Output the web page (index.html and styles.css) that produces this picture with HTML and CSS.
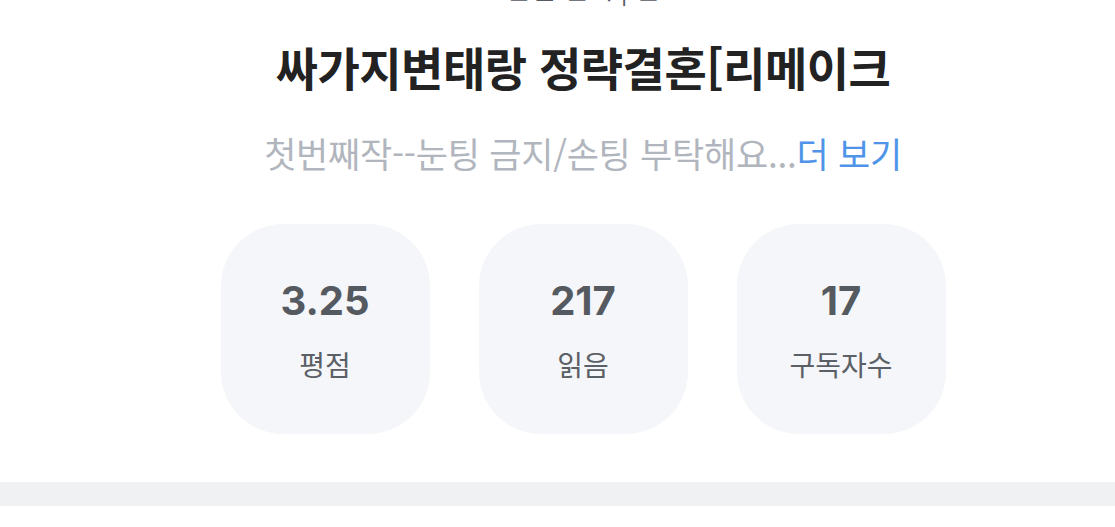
FILE: index.html
```html
<!DOCTYPE html>
<html lang="ko">
<head>
  <meta charset="UTF-8">
  <meta name="viewport" content="width=device-width, initial-scale=1.0">
  <title>작품 정보</title>
  <link rel="stylesheet" href="styles.css">
</head>
<body>
    <section class="work">
        <p class="meta">완결 연재 | 판</p>
        <h1 class="title">싸가지변태랑 정략결혼[리메이크</h1>
        <p class="intro">첫번째작--눈팅 금지/손팅 부탁해요...<a class="more" href="#">더 보기</a></p>

        <ul class="stats">
            <li class="stat">
                <strong>3.25</strong>
                <span>평점</span>
            </li>
            <li class="stat">
                <strong>217</strong>
                <span>읽음</span>
            </li>
            <li class="stat">
                <strong>17</strong>
                <span>구독자수</span>
            </li>
        </ul>
    </section>

    <div class="divider"></div>
</body>
</html>
```

FILE: styles.css
```css
* {
  margin: 0;
  padding: 0;
  box-sizing: border-box;
}

body {
  background: #fff;
  font-family: "Noto Sans CJK KR", "Noto Sans", sans-serif;
  overflow: hidden;
}

.work {
  padding-left: 51px;
  padding-bottom: 48px;
  text-align: center;
}

/* only the bottom edge of this line shows, as in the app */
.meta {
  font-size: 27px;
  line-height: 36px;
  color: #555a61;
  margin-top: -30px;
}

.title {
  margin-top: 30px;
  font-size: 46px;
  line-height: 60px;
  font-weight: 700;
  color: #222;
  letter-spacing: -0.5px;
}

.intro {
  margin-top: 35px;
  font-size: 35px;
  line-height: 44px;
  color: #b1b5bd;
  letter-spacing: -0.25px;
}

.more {
  color: #4f94e8;
  text-decoration: none;
}

.stats {
  list-style: none;
  display: flex;
  justify-content: center;
  gap: 49px;
  margin-top: 49px;
}

.stat {
  width: 209px;
  height: 210px;
  border-radius: 62px;
  background: #f5f6f9;
  display: flex;
  flex-direction: column;
  align-items: center;
  justify-content: center;
  gap: 22px;
  color: #555a61;
}

.stat strong {
  font-family: Inter, "Noto Sans", sans-serif;
  font-size: 40px;
  line-height: 48px;
  font-weight: 700;
}

.stat span {
  font-size: 28px;
  line-height: 34px;
  color: #5b5f66;
}

.divider {
  height: 24px;
  background: #f0f1f3;
}
```
